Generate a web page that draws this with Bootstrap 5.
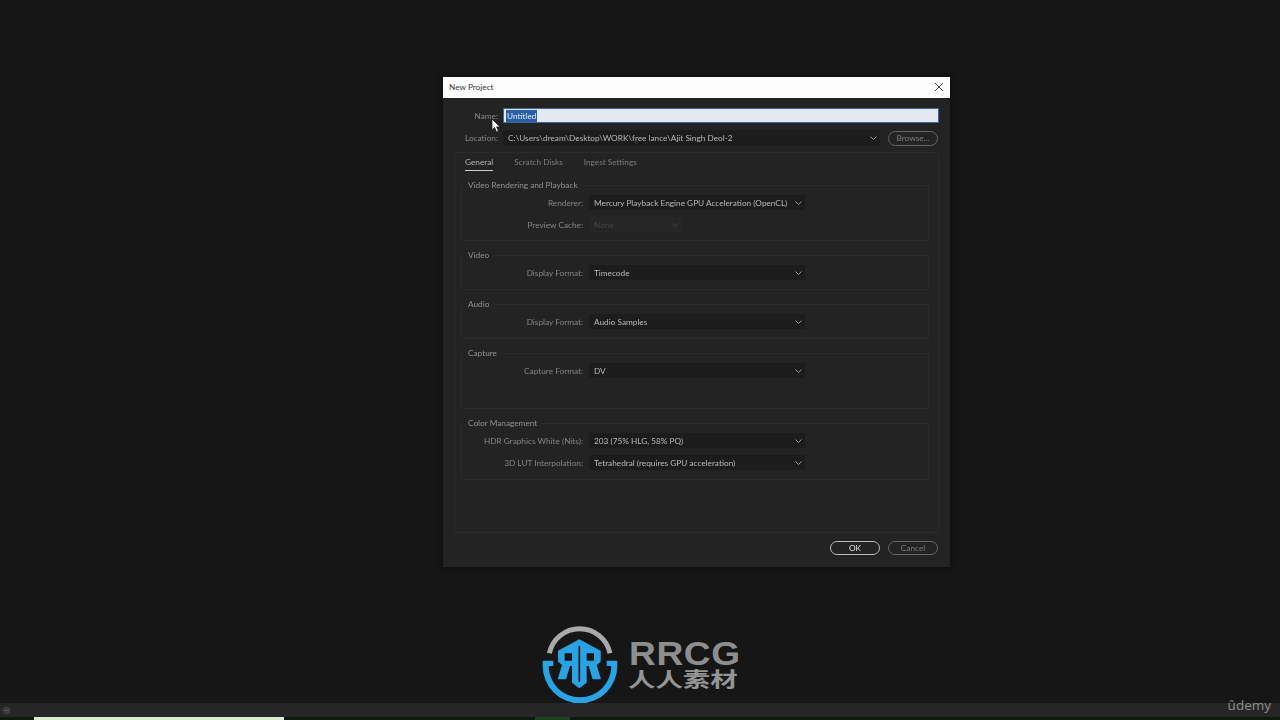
<!DOCTYPE html>
<html lang="en">
<head>
<meta charset="utf-8">
<title>New Project</title>
<link href="https://cdn.jsdelivr.net/npm/bootstrap@5.3.0/dist/css/bootstrap.min.css" rel="stylesheet">
<style>
html,body{height:720px;overflow:hidden;}
body{background:#161616;font-family:Lato,"Liberation Sans",sans-serif;font-size:8.25px;line-height:14px;color:#b8b8b8;white-space:nowrap;}
.stage{height:703px;position:relative;padding:77px 0 0 443px;}
.dlg{width:507px;height:490px;background:#232323;box-shadow:0 0 6px #0c0c0c;filter:blur(.4px);}
.dlg-title{height:21px;background:#fdfdfd;color:#3a3a3a;padding:0 6px 1px;}
.dlg-body{padding:10px 11px 0;}
.lbl{color:#858585;text-align:right;flex:none;}
.top-lbl{width:44px;margin-right:5px;}
.name-input{height:15px;flex:1;background:#e3e7f1;border:1px solid #3f659f;padding:0 2px;color:#fff;}
.name-input span{background:#2a5fa8;color:#dfe9f6;padding:0 1px;display:inline-block;height:12px;line-height:12px;}
.loc-row{margin-top:7px;}
.fld{background:#1c1c1c;height:15px;padding:0 3px 0 5px;color:#b8b8b8;}
.fld svg{flex:none;}
.fld-loc{width:377px;height:16px;}
.pill{width:50px;height:14px;border:1px solid #666;border-radius:8px;color:#7c7c7c;text-align:center;line-height:12px;}
.pill-ok{border-color:#bdbdbd;color:#e2e2e2;}
.browse{margin-left:8px;height:15px;}
.panel{height:381px;margin-top:6px;border:1px solid #2a2a2a;padding:0 9px 0 6px;}
.tabs{height:17px;padding:1px 0 0 4px;gap:21px;margin-bottom:15px;}
.tab-item{color:#7d7d7d;height:17px;padding-top:1px;}
.tab-on{color:#b5b5b5;border-bottom:1px solid #cfcfcf;}
.grp{border:1px solid #2a2a2a;margin-bottom:14px;}
.grp-l{height:56px;}
.grp-s{height:35px;}
.grp-m{height:57px;}
.grp-t{display:block;width:fit-content;background:#232323;color:#929292;margin:-8px 0 3px 2px;padding:0 4px;height:14px;}
.rw{margin-bottom:7px;}
.rw-lbl{width:121px;margin-right:6px;}
.rw-f{width:216px;}
.off{color:#454545;background:#262626;width:93px;}
.foot{margin-top:8px;gap:8px;padding-right:1px;}
.ptr{position:absolute;left:491px;top:118px;}
.logo-wrap{position:absolute;left:530px;top:620px;width:220px;height:90px;}
.logo-wrap svg{position:absolute;left:0;top:0;}
.wm{position:absolute;left:99px;top:22px;height:26px;font:700 36px/26px "Liberation Sans",sans-serif;color:#8e8e8e;letter-spacing:.6px;transform:scale(1.03,.9);transform-origin:left top;}
.wm-cn{position:absolute;left:98px;top:47px;height:24px;font:700 20px/24px "Noto Sans CJK SC",sans-serif;color:#959595;transform:scaleX(1.37);transform-origin:left top;white-space:nowrap;}
.bar{height:14px;background:#262626;padding:0 9px 0 2px;position:relative;}
.ud{font:400 13.5px/14px "Open Sans",sans-serif;color:#8f8f8f;margin-top:-11px;}
.strip{height:3px;background:#0d1a0d;}
.s1{width:250px;margin-left:34px;background:#d8ecd0;}
.s2{width:35px;margin-left:251px;background:#1d431d;}
</style>
</head>
<body>
<div class="stage">
  <div class="dlg d-flex flex-column">
    <div class="dlg-title d-flex align-items-center justify-content-between">
      <span>New Project</span>
      <svg width="10" height="10" viewBox="0 0 10 10"><path d="M1 1l8 8M9 1l-8 8" stroke="#444" stroke-width="1" fill="none"/></svg>
    </div>
    <div class="dlg-body">
      <div class="d-flex align-items-center">
        <div class="lbl top-lbl">Name:</div>
        <div class="name-input d-flex align-items-center"><span>Untitled</span></div>
      </div>
      <div class="d-flex align-items-center loc-row">
        <div class="lbl top-lbl">Location:</div>
        <div class="fld fld-loc d-flex align-items-center justify-content-between">
          <span>C:\Users\dream\Desktop\WORK\free lance\Ajit Singh Deol-2</span>
          <svg width="7" height="4" viewBox="0 0 7 4"><path d="M.5.5l3 3 3-3" stroke="#9a9a9a" fill="none"/></svg>
        </div>
        <div class="pill browse">Browse...</div>
      </div>
      <div class="panel">
        <div class="tabs d-flex">
          <div class="tab-item tab-on">General</div>
          <div class="tab-item">Scratch Disks</div>
          <div class="tab-item">Ingest Settings</div>
        </div>
        <div class="grp grp-l">
          <div class="grp-t">Video Rendering and Playback</div>
          <div class="d-flex align-items-center rw"><div class="lbl rw-lbl">Renderer:</div><div class="fld rw-f d-flex align-items-center justify-content-between"><span>Mercury Playback Engine GPU Acceleration (OpenCL)</span><svg width="7" height="4" viewBox="0 0 7 4"><path d="M.5.5l3 3 3-3" stroke="#9a9a9a" fill="none"/></svg></div></div>
          <div class="d-flex align-items-center rw"><div class="lbl rw-lbl">Preview Cache:</div><div class="fld off d-flex align-items-center justify-content-between"><span>None</span><svg width="7" height="4" viewBox="0 0 7 4"><path d="M.5.5l3 3 3-3" stroke="#444" fill="none"/></svg></div></div>
        </div>
        <div class="grp grp-s">
          <div class="grp-t">Video</div>
          <div class="d-flex align-items-center rw"><div class="lbl rw-lbl">Display Format:</div><div class="fld rw-f d-flex align-items-center justify-content-between"><span>Timecode</span><svg width="7" height="4" viewBox="0 0 7 4"><path d="M.5.5l3 3 3-3" stroke="#9a9a9a" fill="none"/></svg></div></div>
        </div>
        <div class="grp grp-s">
          <div class="grp-t">Audio</div>
          <div class="d-flex align-items-center rw"><div class="lbl rw-lbl">Display Format:</div><div class="fld rw-f d-flex align-items-center justify-content-between"><span>Audio Samples</span><svg width="7" height="4" viewBox="0 0 7 4"><path d="M.5.5l3 3 3-3" stroke="#9a9a9a" fill="none"/></svg></div></div>
        </div>
        <div class="grp grp-l">
          <div class="grp-t">Capture</div>
          <div class="d-flex align-items-center rw"><div class="lbl rw-lbl">Capture Format:</div><div class="fld rw-f d-flex align-items-center justify-content-between"><span>DV</span><svg width="7" height="4" viewBox="0 0 7 4"><path d="M.5.5l3 3 3-3" stroke="#9a9a9a" fill="none"/></svg></div></div>
        </div>
        <div class="grp grp-m">
          <div class="grp-t">Color Management</div>
          <div class="d-flex align-items-center rw"><div class="lbl rw-lbl">HDR Graphics White (Nits):</div><div class="fld rw-f d-flex align-items-center justify-content-between"><span>203 (75% HLG, 58% PQ)</span><svg width="7" height="4" viewBox="0 0 7 4"><path d="M.5.5l3 3 3-3" stroke="#9a9a9a" fill="none"/></svg></div></div>
          <div class="d-flex align-items-center rw"><div class="lbl rw-lbl">3D LUT Interpolation:</div><div class="fld rw-f d-flex align-items-center justify-content-between"><span>Tetrahedral (requires GPU acceleration)</span><svg width="7" height="4" viewBox="0 0 7 4"><path d="M.5.5l3 3 3-3" stroke="#9a9a9a" fill="none"/></svg></div></div>
        </div>
      </div>
      <div class="d-flex justify-content-end foot">
        <div class="pill pill-ok">OK</div>
        <div class="pill">Cancel</div>
      </div>
    </div>
  </div>
  <svg class="ptr" width="11" height="15" viewBox="0 0 11 15"><path d="M1 1v11l2.6-2.4 1.8 4.2 2-.9-1.8-4h3.4z" fill="#fff" stroke="#111" stroke-width=".7"/></svg>
  <div class="logo-wrap">
    <svg width="220" height="90" viewBox="0 0 660 270">
      <path d="M58 100A93 93 0 0 1 240 100" fill="none" stroke="#a9a9a9" stroke-width="15"/>
      <path d="M38 126H70V142H56A94 94 0 0 0 244 142H230V126H262V142A112 112 0 0 1 38 142Z" fill="#29a3e3" transform="translate(0 -4)"/>
      <path fill-rule="evenodd" d="M148 58L212 92V125L200 135L213 178H188L176 138H170V188L148 205L126 188V138H120L108 178H83L96 135L84 125V92ZM104 100V122H126V100ZM170 100V122H192V100Z" fill="#29a3e3"/>
      <path d="M148 78V186" stroke="#161616" stroke-width="5" fill="none"/>
    </svg>
    <div class="wm">RRCG</div>
    <div class="wm-cn">人人素材</div>
  </div>
</div>
<div class="bar d-flex align-items-center justify-content-between">
  <svg width="9" height="9" viewBox="0 0 9 9"><circle cx="4.5" cy="4.5" r="4" fill="#3a3a3a"/><path d="M2 4.5h5" stroke="#555"/></svg>
  <div class="ud">ûdemy</div>
</div>
<div class="strip d-flex"><div class="s1"></div><div class="s2"></div></div>
<script src="https://cdn.jsdelivr.net/npm/bootstrap@5.3.0/dist/js/bootstrap.bundle.min.js"></script>
</body>
</html>
